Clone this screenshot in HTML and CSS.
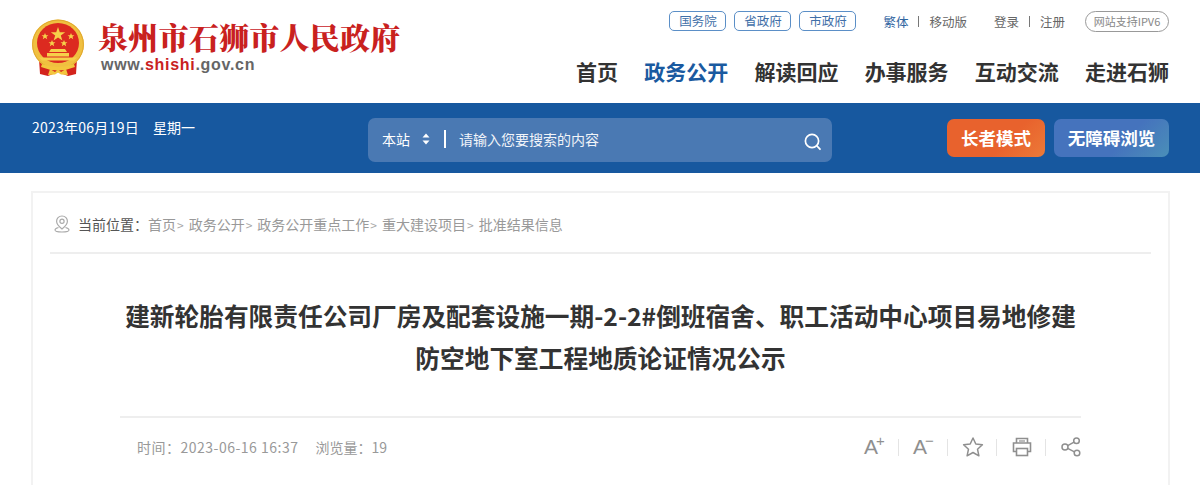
FILE: index.html
```html
<!DOCTYPE html>
<html lang="zh-CN">
<head>
<meta charset="utf-8">
<title>泉州市石狮市人民政府</title>
<link rel="stylesheet" href="styles.css">
</head>
<body>
<header class="top">
  <div class="brand">
    <svg class="emblem" width="54" height="58" viewBox="0 0 54 58">
      <path d="M8 40 L9 55 L17 57 L27 53 L37 57 L45 55 L46 40Z" fill="#d3231c"/>
      <ellipse cx="27" cy="25.5" rx="26" ry="25" fill="#f0c040"/>
      <ellipse cx="27" cy="25.5" rx="25.4" ry="24.4" fill="none" stroke="#e0a82e" stroke-width="1"/>
      <ellipse cx="27" cy="24" rx="21" ry="20" fill="#dc2a20"/>
      <polygon points="27,8 28.8,13.2 34.2,13.2 29.8,16.5 31.4,21.6 27,18.5 22.6,21.6 24.2,16.5 19.8,13.2 25.2,13.2" fill="#f6d04a"/>
      <polygon points="14,14 15,16.2 17.4,16.2 15.5,17.8 16.2,20.2 14,18.8 11.8,20.2 12.5,17.8 10.6,16.2 13,16.2" fill="#f6d04a"/>
      <polygon points="40,14 41,16.2 43.4,16.2 41.5,17.8 42.2,20.2 40,18.8 37.8,20.2 38.5,17.8 36.6,16.2 39,16.2" fill="#f6d04a"/>
      <polygon points="21,21 22,23.2 24.4,23.2 22.5,24.8 23.2,27.2 21,25.8 18.8,27.2 19.5,24.8 17.6,23.2 20,23.2" fill="#f6d04a"/>
      <polygon points="33,21 34,23.2 36.4,23.2 34.5,24.8 35.2,27.2 33,25.8 30.8,27.2 31.5,24.8 29.6,23.2 32,23.2" fill="#f6d04a"/>
      <path d="M20 30 H34 L36 33 H18Z M16 34 H38 V37.5 H16Z M8 38.5 H46 L43 41.5 H11Z" fill="#f6d04a"/>
      <path d="M11 45 Q27 51 43 45 L44 48 Q27 55 10 48Z" fill="#f3c63e"/>
      <path d="M19 50 L24 53 L27 50 L30 53 L35 50 L37 56 L30 55.5 L27 53.5 L24 55.5 L17 56Z" fill="#f3c63e"/>
    </svg>
    <div class="brand-text">
      <div class="site-name">泉州市石狮市人民政府</div>
      <div class="site-url">www.<span class="url-red">shishi</span>.gov.cn</div>
    </div>
  </div>
  <div class="top-right">
    <div class="util">
      <div class="gov-links">
        <a class="gov-link">国务院</a>
        <a class="gov-link">省政府</a>
        <a class="gov-link">市政府</a>
      </div>
      <div class="pair pair-lang"><a class="lang">繁体</a><i class="sep"></i><a>移动版</a></div>
      <div class="pair pair-login"><a>登录</a><i class="sep"></i><a>注册</a></div>
      <div class="ipv6">网站支持IPV6</div>
    </div>
    <nav class="nav">
      <a>首页</a><a class="active">政务公开</a><a>解读回应</a><a>办事服务</a><a>互动交流</a><a>走进石狮</a>
    </nav>
  </div>
</header>

<section class="band">
  <div class="date"><span class="date-day">2023年06月19日</span><span>星期一</span></div>
  <div class="search">
    <span class="scope">本站</span>
    <svg class="updown" width="8" height="12" viewBox="0 0 8 12"><path d="M4 0.5 L7.5 4.5 H0.5Z M4 11.5 L7.5 7.5 H0.5Z" fill="#fff"/></svg>
    <i class="search-sep"></i>
    <span class="placeholder">请输入您要搜索的内容</span>
    <svg class="magnifier" width="20" height="20" viewBox="0 0 20 20"><circle cx="9" cy="9" r="6.6" fill="none" stroke="#fff" stroke-width="1.7"/><path d="M14 14 L17 17.2" stroke="#fff" stroke-width="1.8" stroke-linecap="round"/></svg>
  </div>
  <div class="modes">
    <a class="mode mode-elder">长者模式</a>
    <a class="mode mode-access">无障碍浏览</a>
  </div>
</section>

<main class="wrap">
  <article class="card">
    <div class="crumbs">
      <svg class="pin" width="16" height="18" viewBox="0 0 16 18"><path d="M8 1 C4.6 1 2.6 3.5 2.6 6.2 C2.6 9.2 6 12.4 8 14 C10 12.4 13.4 9.2 13.4 6.2 C13.4 3.5 11.4 1 8 1Z" fill="none" stroke="#aaa" stroke-width="1.2"/><circle cx="8" cy="6.2" r="2.1" fill="none" stroke="#aaa" stroke-width="1.2"/><path d="M4.5 12.5 C2.5 13 1 14 1 15 C1 16.4 4 17 8 17 C12 17 15 16.4 15 15 C15 14 13.5 13 11.5 12.5" fill="none" stroke="#aaa" stroke-width="1.1"/></svg>
      <span class="crumb-label">当前位置：</span>
      <a>首页</a><span class="gt">&gt;</span><a>政务公开</a><span class="gt">&gt;</span><a>政务公开重点工作</a><span class="gt">&gt;</span><a>重大建设项目</a><span class="gt">&gt;</span><a>批准结果信息</a>
    </div>
    <h1 class="title">建新轮胎有限责任公司厂房及配套设施一期-2-2#倒班宿舍、职工活动中心项目易地修建<br>防空地下室工程地质论证情况公示</h1>
    <div class="meta">
      <div class="meta-text"><span class="meta-time">时间：2023-06-16 16:37</span><span>浏览量：19</span></div>
      <div class="tools">
        <span class="tool font-tool">A<sup>+</sup></span>
        <i class="tool-sep"></i>
        <span class="tool font-tool">A<sup>−</sup></span>
        <i class="tool-sep"></i>
        <svg class="tool" width="22" height="22" viewBox="0 0 22 22"><polygon points="11,2 13.8,8 20.4,8.8 15.5,13.2 16.9,19.8 11,16.5 5.1,19.8 6.5,13.2 1.6,8.8 8.2,8" fill="none" stroke="#8f8f8f" stroke-width="1.5" stroke-linejoin="round"/></svg>
        <i class="tool-sep"></i>
        <svg class="tool" width="22" height="22" viewBox="0 0 22 22"><path d="M5.5 7 V2.5 H16.5 V7 M5.5 15.5 H2.5 V7 H19.5 V15.5 H16.5" fill="none" stroke="#8f8f8f" stroke-width="1.6"/><rect x="5.5" y="12.5" width="11" height="7" fill="none" stroke="#8f8f8f" stroke-width="1.6"/><path d="M8 5 H14" stroke="#8f8f8f" stroke-width="1.2"/></svg>
        <i class="tool-sep"></i>
        <svg class="tool" width="22" height="22" viewBox="0 0 22 22"><circle cx="5" cy="11" r="3" fill="none" stroke="#8f8f8f" stroke-width="1.5"/><circle cx="16.5" cy="4.8" r="2.8" fill="none" stroke="#8f8f8f" stroke-width="1.5"/><circle cx="17" cy="17" r="2.8" fill="none" stroke="#8f8f8f" stroke-width="1.5"/><path d="M7.7 9.6 L14 6.2 M7.7 12.4 L14.4 15.8" stroke="#8f8f8f" stroke-width="1.5"/></svg>
      </div>
    </div>
  </article>
</main>
</body>
</html>
```
FILE: styles.css
```css
* { box-sizing: border-box; }
html, body { margin: 0; padding: 0; height: 485px; overflow: hidden; background: #fff; }
body { font-family: "Noto Sans CJK SC", "Liberation Sans", sans-serif; color: #333; }
a { color: inherit; text-decoration: none; }
i { font-style: normal; display: block; }

.top { height: 103px; display: flex; justify-content: space-between; padding: 0 31px 0 32px; }
.brand { display: flex; align-items: flex-start; padding-top: 19px; gap: 13px; }
.emblem { margin-left: -1px; flex: none; }
.brand-text { display: flex; flex-direction: column; margin-top: -1px; }
.site-name { font-family: "Noto Serif CJK SC", "Noto Sans CJK SC", serif; font-weight: 900; font-size: 30px; line-height: 36px; letter-spacing: .25px; color: #c9211e; white-space: nowrap; }
.site-url { font-family: "Liberation Sans", sans-serif; font-weight: 700; font-size: 16px; line-height: 18px; letter-spacing: .7px; color: #666; margin: 2px 0 0 3px; height: 18px; }
.url-red { color: #c9211e; }

.top-right { display: flex; flex-direction: column; align-items: flex-end; }
.util { display: flex; align-items: center; height: 20px; margin-top: 11px; font-size: 12.5px; color: #666; }
.gov-links { display: flex; gap: 8px; }
.gov-link { width: 57px; height: 20px; line-height: 18px; text-align: center; border: 1px solid #5b8fc7; border-radius: 5px; color: #3f6fa8; }
.pair { display: flex; align-items: center; gap: 10px; }
.pair-lang { margin-left: 27px; }
.pair-login { margin-left: 27px; }
.lang { color: #2f659f; }
.sep { width: 1px; height: 11px; background: #777; }
.ipv6 { margin-left: 20px; width: 84px; height: 21px; line-height: 19px; text-align: center; border: 1px solid #999; border-radius: 11px; font-size: 11px; color: #888; white-space: nowrap; }

.nav { display: flex; gap: 26.2px; margin-top: 25px; font-size: 21px; font-weight: 700; line-height: 30px; color: #333; }
.nav .active { color: #1a5aa0; }

.band { height: 70px; background: #17589f; display: flex; align-items: flex-start; padding: 0 31px 0 32px; color: #fff; }
.date { width: 336px; display: flex; gap: 14px; font-size: 14px; line-height: 18px; margin-top: 15px; }
.date-day { letter-spacing: .25px; }
.search { width: 464px; height: 44px; margin-top: 15px; padding: 0 14px 2px; background: #4a79b3; border-radius: 7px; display: flex; align-items: center; font-size: 14px; }
.scope { width: 40px; }
.updown { flex: none; }
.search-sep { width: 2px; height: 18px; background: #fff; margin: 0 13px 0 14px; flex: none; }
.placeholder { flex: 1; color: #f1f4f9; }
.magnifier { flex: none; margin: 6px -5px 0 0; }
.modes { display: flex; gap: 9px; margin-left: auto; margin-top: 16px; }
.mode { height: 38px; border-radius: 7px; font-size: 17.5px; font-weight: 700; line-height: 37px; text-align: center; color: #fff; }
.mode-elder { width: 98px; background: linear-gradient(135deg, #e8622d 60%, #ec7a38); }
.mode-access { width: 115px; background: linear-gradient(135deg, #4573bd 60%, #4a8fb8); }

.wrap { padding: 18px 30px 0 31px; }
.card { border: 2px solid #f2f2f2; border-bottom: 0; padding: 0 17px; height: 294px; overflow: hidden; }
.crumbs { display: flex; align-items: center; height: 61px; border-bottom: 2px solid #eee; padding: 3px 0 0 4px; font-size: 14px; color: #999; white-space: nowrap; }
.pin { margin-right: 8px; flex: none; }
.crumb-label { color: #555; width: 70px; }
.gt { font-size: 12px; color: #aaa; margin: 0 5px 0 1px; }
.title { margin: 40px 0 0; text-align: center; font-size: 24.7px; line-height: 42px; font-weight: 700; color: #333; white-space: nowrap; }
.meta { margin: 38px 70px 0 70px; height: 60px; border-top: 2px solid #eee; display: flex; justify-content: space-between; align-items: center; padding: 0 0 0 17px; }
.meta-text { display: flex; gap: 17px; font-size: 14px; color: #999; }
.meta-time { letter-spacing: .5px; }
.tools { display: flex; align-items: center; margin-right: -1px; }
.tool { flex: none; }
.font-tool { font-family: "Liberation Sans", sans-serif; font-size: 21px; line-height: 24px; color: #8f8f8f; width: 22px; white-space: nowrap; }
.font-tool sup { font-size: 15px; line-height: 0; vertical-align: 8px; margin-left: -2px; }
.tool-sep { width: 1px; height: 17px; background: #e4e4e4; margin: 0 14px 0 12px; }
```
